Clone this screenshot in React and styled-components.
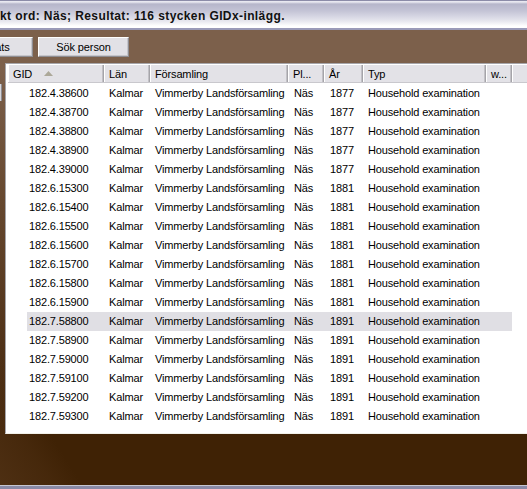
import React from "react";
import styled, { createGlobalStyle } from "styled-components";

const Global = createGlobalStyle`
  html, body { margin: 0; padding: 0; overflow: hidden; background: #3f2205; }
  * { box-sizing: border-box; }
`;

const Screen = styled.div`
  width: 527px;
  height: 489px;
  overflow: hidden;
  display: flex;
  flex-direction: column;
  font-family: "Liberation Sans", Arial, sans-serif;
`;

const TitleBar = styled.div`
  height: 30px;
  flex: none;
  border-top: 1px solid #8c8ca8;
  border-bottom: 2px solid #9a9ab8;
  background: linear-gradient(
    180deg,
    #e8e8f0 0px,
    #e8e8f0 1px,
    #b6b6ca 3px,
    #c4c4d6 10px,
    #e6e6ee 20px,
    #ffffff 25px,
    #ffffff 27px
  );
  padding: 8px 0 0 0;
  font-size: 12px;
  line-height: 14px;
  font-weight: bold;
  letter-spacing: 0.4px;
  color: #111;
  white-space: nowrap;
`;

const Workspace = styled.div`
  flex: 1;
  overflow: hidden;
  padding-top: 7px;
  background:
    linear-gradient(58deg, rgba(90, 58, 30, 0.55) 0px, rgba(90, 58, 30, 0.25) 45px, rgba(90, 58, 30, 0) 70px),
    linear-gradient(180deg, #7c604b 0px, #7c604b 40px, #66482f 170px, #4e3016 330px, #3f2205 405px);
`;

const ButtonRow = styled.div`
  display: flex;
  gap: 5px;
  margin-left: -58px;
`;

const Button = styled.div`
  width: 91px;
  height: 20px;
  display: flex;
  align-items: center;
  justify-content: center;
  background: #e2e1e6;
  border: 1px solid;
  border-color: #ffffff #8e8d92 #8e8d92 #ffffff;
  box-shadow: inset -1px -1px 0 #c6c5ca;
  font-size: 11px;
  letter-spacing: -0.1px;
  color: #000;
`;

const ListArea = styled.div`
  display: flex;
  gap: 3px;
  margin-top: 6px;
`;

const StubColumn = styled.div`
  width: 2px;
  flex: none;
  display: flex;
  flex-direction: column;
  padding-top: 21px;
`;

const Stub = styled.div`
  height: 17px;
  background: #d6d5da;
  border-right: 1px solid #8e8d92;
`;

const List = styled.div`
  width: 560px;
  height: 371px;
  flex: none;
  background: #ffffff;
  border: 1px solid;
  border-color: #a6a5aa #f2f1ea #f2f1ea #a6a5aa;
  padding: 1px 0 0 2px;
  font-size: 11px;
  letter-spacing: -0.15px;
  color: #000;
`;

const Header = styled.div`
  display: flex;
  height: 18px;
  border-bottom: 1px solid #c9c8cd;
`;

const HeadCell = styled.div`
  width: ${(p) => p.$w}px;
  flex: none;
  display: flex;
  align-items: center;
  gap: 12px;
  padding-left: 5px;
  background: #e3e2e7;
  border-right: 1px solid #a5a4a9;
  box-shadow: inset -1px 0 0 #c2c1c6, inset 1px 0 0 #ffffff;
  white-space: nowrap;
`;

const HeadFill = styled.div`
  flex: 1;
  background: #e3e2e7;
  box-shadow: inset 1px 0 0 #ffffff;
`;

const Rows = styled.div`
  padding-top: 1px;
`;

const Row = styled.div`
  display: flex;
  height: 19px;
`;

const Indent = styled.div`
  width: 19px;
  flex: none;
`;

const RowBody = styled.div`
  display: flex;
  background: ${(p) => (p.$selected ? "#e0dfe4" : "transparent")};
`;

const Cell = styled.div`
  width: ${(p) => p.$w}px;
  flex: none;
  padding-left: ${(p) => p.$pad}px;
  line-height: 19px;
  white-space: nowrap;
  overflow: hidden;
`;

const SortArrow = () => (
  <svg width="9" height="5" viewBox="0 0 9 5">
    <path d="M4.5 0 L9 5 L0 5 Z" fill="#aca899" />
  </svg>
);

const BottomEdge = styled.div`
  height: 4px;
  flex: none;
  border-top: 1px solid #c6c6d0;
  background: #8a8aa6;
`;

const headCols = [
  { label: "GID", w: 96, arrow: true },
  { label: "Län", w: 46 },
  { label: "Församling", w: 138 },
  { label: "Pl...", w: 36 },
  { label: "År", w: 39 },
  { label: "Typ", w: 123 },
  { label: "w...", w: 26 },
];

const cols = [
  { key: "gid", w: 77, pad: 2 },
  { key: "lan", w: 46, pad: 5 },
  { key: "fors", w: 138, pad: 5 },
  { key: "pl", w: 36, pad: 6 },
  { key: "ar", w: 39, pad: 6 },
  { key: "typ", w: 123, pad: 5 },
  { key: "w", w: 26, pad: 5 },
];

const data = [
  ["182.4.38600", "1877"],
  ["182.4.38700", "1877"],
  ["182.4.38800", "1877"],
  ["182.4.38900", "1877"],
  ["182.4.39000", "1877"],
  ["182.6.15300", "1881"],
  ["182.6.15400", "1881"],
  ["182.6.15500", "1881"],
  ["182.6.15600", "1881"],
  ["182.6.15700", "1881"],
  ["182.6.15800", "1881"],
  ["182.6.15900", "1881"],
  ["182.7.58800", "1891"],
  ["182.7.58900", "1891"],
  ["182.7.59000", "1891"],
  ["182.7.59100", "1891"],
  ["182.7.59200", "1891"],
  ["182.7.59300", "1891"],
].map(([gid, ar]) => ({
  gid,
  lan: "Kalmar",
  fors: "Vimmerby Landsförsamling",
  pl: "Näs",
  ar,
  typ: "Household examination",
  w: "",
}));

export default function App() {
  return (
    <>
      <Global />
      <Screen>
        <TitleBar>kt ord: Näs; Resultat: 116 stycken GIDx-inlägg.</TitleBar>
        <Workspace>
          <ButtonRow>
            <Button>Sök plats</Button>
            <Button>Sök person</Button>
          </ButtonRow>
          <ListArea>
            <StubColumn>
              <Stub />
            </StubColumn>
            <List>
              <Header>
                {headCols.map((c) => (
                  <HeadCell key={c.label} $w={c.w}>
                    {c.label}
                    {c.arrow && <SortArrow />}
                  </HeadCell>
                ))}
                <HeadFill />
              </Header>
              <Rows>
                {data.map((r, i) => (
                  <Row key={r.gid}>
                    <Indent />
                    <RowBody $selected={i === 12}>
                      {cols.map((c) => (
                        <Cell key={c.key} $w={c.w} $pad={c.pad}>
                          {r[c.key]}
                        </Cell>
                      ))}
                    </RowBody>
                  </Row>
                ))}
              </Rows>
            </List>
          </ListArea>
        </Workspace>
        <BottomEdge />
      </Screen>
    </>
  );
}
